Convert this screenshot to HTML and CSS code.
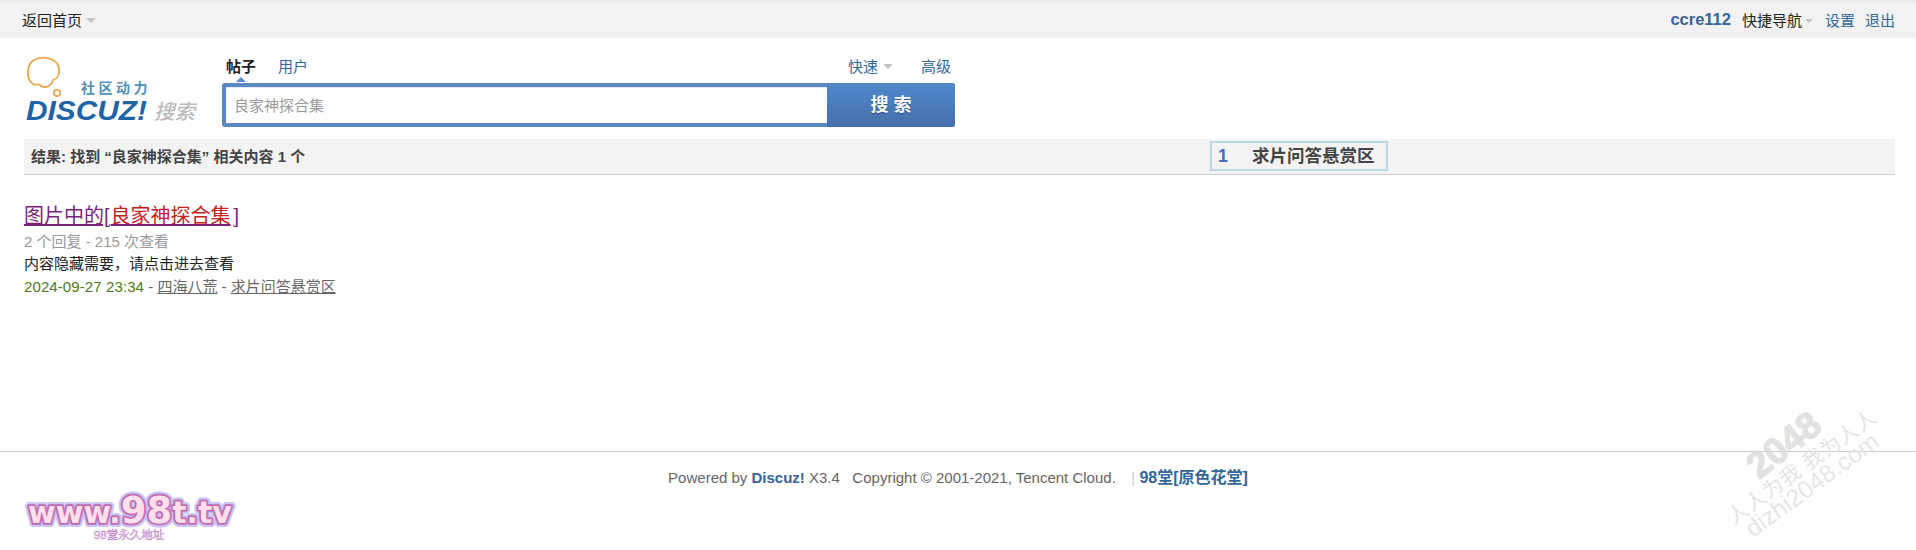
FILE: index.html
```html
<!DOCTYPE html>
<html lang="zh-CN">
<head>
<meta charset="utf-8">
<title>搜索</title>
<link rel="stylesheet" href="styles.css">
</head>
<body>
<div class="topbar">
  <a class="home">返回首页<i class="caret"></i></a>
  <div class="userlinks">
    <a class="user">ccre112</a>
    <a class="quick">快捷导航<i class="caret small"></i></a>
    <a class="plain">设置</a>
    <a class="plain">退出</a>
  </div>
</div>

<header class="searchhead">
  <svg class="logo" width="176" height="72" viewBox="0 0 176 72">
    <path class="bubble" d="M9 29 C2 24 2 10 10 5 C19 0 33 3 35 13 C36 20 33 24 29 25 C27 32 20 34 16 30 C13 28 11 31 9 29 Z"/>
    <circle class="bubble" cx="33" cy="38" r="3.2"/>
    <text class="logo-cn" x="57" y="38">社区动力</text>
    <text class="logo-dz" x="2" y="65" textLength="121" lengthAdjust="spacingAndGlyphs">DISCUZ!</text>
    <text class="logo-ss" x="130" y="64">搜索</text>
  </svg>
  <div class="searchcol">
    <div class="tabs">
      <a class="tab on">帖子</a>
      <a class="tab">用户</a>
      <span class="tabs-gap"></span>
      <a class="tab">快速<i class="caret"></i></a>
      <a class="tab">高级</a>
    </div>
    <form class="searchbox">
      <input class="q" type="text" placeholder="良家神探合集">
      <span class="go">搜 索</span>
    </form>
  </div>
</header>

<div class="resultbar">
  <span class="count">结果: 找到 “良家神探合集” 相关内容 1 个</span>
  <span class="forumtab"><b class="num">1</b><b class="fname">求片问答悬赏区</b></span>
</div>

<main class="results">
  <h3 class="rtitle"><a>图片中的[<em>良家神探合集</em>]</a></h3>
  <p class="meta">2 个回复 - 215 次查看</p>
  <p class="desc">内容隐藏需要，请点击进去查看</p>
  <p class="info"><span class="date">2024-09-27 23:34</span> - <a>四海八荒</a> - <a>求片问答悬赏区</a></p>
</main>

<footer class="foot">
  <svg class="urlbadge" width="232" height="70" viewBox="0 0 232 70">
    <text class="u u1" x="122" y="51">www.<tspan class="big">98</tspan>t.tv</text>
    <text class="u u2" x="122" y="51">www.<tspan class="big">98</tspan>t.tv</text>
    <text class="u u3" x="122" y="51">www.<tspan class="big">98</tspan>t.tv</text>
    <text class="u u4" x="122" y="51">www.<tspan class="big">98</tspan>t.tv</text>
    <text class="sub" x="121" y="67">98堂永久地址</text>
  </svg>
  <p class="credit">Powered by <b>Discuz!</b> X3.4 &nbsp; Copyright © 2001-2021, Tencent Cloud. &nbsp; <span class="pipe">|</span> <b class="site">98堂[原色花堂]</b></p>
</footer>

<svg class="watermark" width="216" height="170" viewBox="0 0 216 170">
  <text class="wm-big" transform="translate(59 100) rotate(-38)">2048</text>
  <text class="wm-cn" transform="translate(34 145) rotate(-36)">人人为我 我为人人</text>
  <text class="wm-en" transform="translate(53 158) rotate(-36)">dizhi2048.com</text>
</svg>
</body>
</html>
```

FILE: styles.css
```css
* { box-sizing: border-box; }
html, body { margin: 0; padding: 0; }
body {
  position: relative;
  height: 550px;
  overflow: hidden;
  background: #fff;
  color: #444;
  font: 15px/1.4 "Liberation Sans", "Noto Sans CJK SC", sans-serif;
}
a { color: inherit; }
p, h3 { margin: 0; }

.caret {
  display: inline-block;
  width: 0; height: 0;
  margin-left: 4px;
  border: 5px solid transparent;
  border-top: 5px solid #c4c4c4;
  border-bottom: 0;
  vertical-align: 3px;
}
.caret.small { border-width: 4px 4px 0; margin-left: 3px; }

.topbar {
  display: flex;
  justify-content: space-between;
  align-items: center;
  height: 38px;
  padding: 0 21px 0 22px;
  background: #f2f2f2;
  border-top: 2px solid #e6ebee;
  color: #222;
}
.userlinks { display: flex; align-items: center; }
.user { font-weight: bold; color: #369; font-size: 16.5px; margin-right: 11px; }
.quick { margin-right: 2px; }
.plain { color: #369; margin-left: 10px; }
.plain:first-of-type { margin-left: 0; }

.searchhead {
  display: flex;
  height: 101px;
  padding: 17px 0 0 24px;
}
.logo { flex: none; margin-right: 22px; display: block; }
.bubble { fill: none; stroke: #e9a750; stroke-width: 1.8; }
.logo-cn { font-size: 14px; font-weight: bold; fill: #4f8fb8; letter-spacing: 3.5px; }
.logo-dz { font: italic bold 28px "Liberation Sans", sans-serif; fill: #1f64a8; }
.logo-ss { font-size: 20.5px; font-weight: 500; font-style: italic; fill: #bbb; }

.searchcol { width: 733px; display: flex; flex-direction: column; }
.tabs { display: flex; height: 28px; padding: 1px 4px 0 4px; align-items: flex-start; }
.tab { color: #369; margin-right: 22px; line-height: 21px; }
.tab:last-child { margin-right: 0; }
.tab:nth-last-child(2) { margin-right: 28px; }
.tab:nth-last-child(2) .caret { margin-left: 5px; }
.tab.on { color: #222; font-weight: bold; position: relative; }
.tab.on::after {
  content: "";
  position: absolute;
  left: 10px; top: 21px;
  border: 5px solid transparent;
  border-bottom: 5px solid #5b8cc3;
  border-top: 0;
}
.tabs-gap { flex: 1; }

.searchbox {
  display: flex;
  height: 44px;
  margin: 0;
  background: #5a88bf;
  border-radius: 3px;
  padding: 4px 0 4px 4px;
  position: relative;
}
.q {
  width: 601px;
  height: 36px;
  border: 0;
  outline: 0;
  padding: 0 8px;
  background: #fff;
  font: 15px "Liberation Sans", "Noto Sans CJK SC", sans-serif;
  box-shadow: inset 0 1px 1px #dfe8f3;
}
.q::placeholder { color: #999; opacity: 1; }
.go {
  width: 128px;
  margin: -4px 0;
  height: 44px;
  line-height: 44px;
  text-align: center;
  border-radius: 0 3px 3px 0;
  background: linear-gradient(#4f88cb, #4670aa);
  color: #fff;
  font-weight: bold;
  font-size: 18px;
  text-shadow: 0 1px 1px #2d4f7f;
}

.resultbar {
  position: relative;
  display: flex;
  align-items: center;
  height: 36px;
  margin: 0 21px 0 24px;
  padding-left: 7px;
  background: #f3f3f3;
  border-bottom: 1px solid #ccc;
}
.count { font-weight: bold; color: #444; line-height: 36px; }
.forumtab {
  position: absolute;
  left: 1186px;
  top: 2px;
  display: flex;
  align-items: center;
  width: 178px;
  height: 30px;
  padding: 1px 0 0 6px;
  border: 2px solid #bcd9e3;
  font-size: 17.5px;
}
.num { color: #4a68c4; width: 34px; }
.fname { color: #444; }

.results { height: 276px; padding: 27px 0 0 24px; }
.rtitle { font-size: 20px; font-weight: normal; line-height: 29px; color: #7d1f7d; }
.rtitle a { text-decoration: underline; }
.rtitle em { font-style: normal; color: #c8201a; margin: 0 3px 0 1px; }
.meta { color: #999; line-height: 22px; margin-top: 0; }
.desc { color: #222; line-height: 22px; }
.info { color: #666; line-height: 23px; }
.info a { text-decoration: underline; }
.date { color: #4b7a22; letter-spacing: .1px; }

.foot {
  position: relative;
  height: 99px;
  border-top: 1px solid #ccc;
}
.credit {
  text-align: center;
  padding: 15px 0 0 0;
  line-height: 22px;
  color: #666;
}
.credit b { color: #369; }
.credit .site { font-size: 16px; }
.pipe { color: #ccc; margin-left: 3px; }
.urlbadge { position: absolute; left: 8px; top: 20px; }
.u {
  font: bold 30px "DejaVu Sans", sans-serif;
  text-anchor: middle;
  stroke-linejoin: round;
  paint-order: stroke;
}
.big { font-size: 37px; }
.u1 { fill: #cfc5f2; stroke: #cfc5f2; stroke-width: 8px; }
.u2 { fill: #b184cc; stroke: #b184cc; stroke-width: 4px; }
.u3 { fill: #d0609f; stroke: #d0609f; stroke-width: 2px; }
.u4 { fill: #fde0ec; stroke: none; }
.sub { font-size: 11.5px; text-anchor: middle; fill: #f3d3e6; stroke: #b478c8; stroke-width: .4px; }

.watermark { position: absolute; left: 1700px; top: 380px; pointer-events: none; }
.wm-big { font: bold 37px "Liberation Sans", sans-serif; fill: #ddd; stroke: #ddd; stroke-width: 1.2px; opacity: .85; }
.wm-cn { font-size: 20.5px; letter-spacing: 1px; fill: #e4e4e4; }
.wm-en { font: 24.5px "Liberation Sans", sans-serif; fill: #e6e6e6; }
```
